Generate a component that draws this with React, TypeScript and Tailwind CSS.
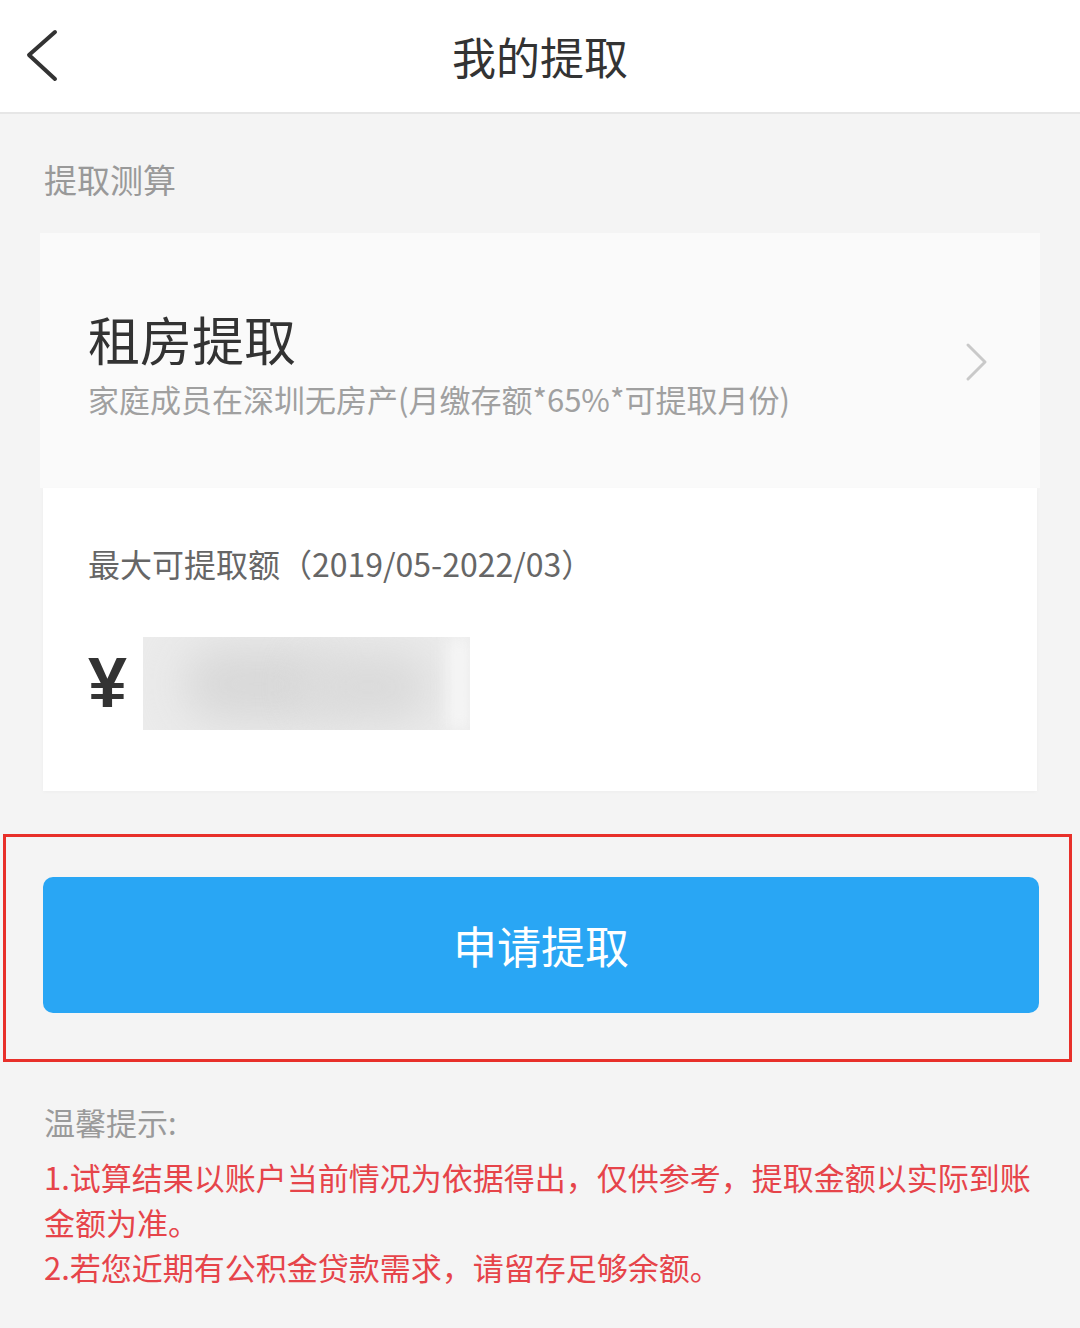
import React from "react";

const font = { fontFamily: '"Noto Sans CJK SC", "Noto Sans", sans-serif' };

export default function App() {
  return (
    <div className="min-h-[1328px] w-[1080px] bg-[#f4f4f4]" style={font}>
      {/* Header */}
      <div className="grid h-[114px] grid-cols-[1fr_auto_1fr] items-center border-b-2 border-[#e6e6e6] bg-white">
        <div className="pl-[24px]">
          <svg width="36" height="54" viewBox="0 0 36 54" fill="none">
            <polyline
              points="31,3 5,26 31,50"
              stroke="#333"
              strokeWidth="4"
              strokeLinecap="round"
              strokeLinejoin="round"
            />
          </svg>
        </div>
        <div className="text-[44px] leading-none text-[#333]">我的提取</div>
        <div />
      </div>

      {/* Section label */}
      <div className="px-[44px] pt-[46px] text-[33px] leading-[1.2] text-[#999]">提取测算</div>

      {/* Cards */}
      <div className="mx-[40px] mt-[33px]">
        <div className="flex items-center justify-between bg-[#fafafa] pl-[48px] pr-[50px] pt-[75px] pb-[71px]">
          <div>
            <div className="text-[52px] leading-[1.2] text-[#333]">租房提取</div>
            <div className="mt-[10px] text-[31px] leading-[1.2] text-[#a0a0a0]">
              家庭成员在深圳无房产(月缴存额*65%*可提取月份)
            </div>
          </div>
          <svg width="26" height="40" viewBox="0 0 26 40" fill="none">
            <polyline
              points="4,3 21,20 4,37"
              stroke="#c9c9c9"
              strokeWidth="3"
              strokeLinecap="round"
              strokeLinejoin="round"
            />
          </svg>
        </div>
        <div className="mx-[3px] bg-white pl-[45px] pt-[56px] pb-[61px] shadow-[0_1px_4px_rgba(0,0,0,0.03)]">
          <div className="text-[32px] leading-[1.2] text-[#666]">最大可提取额（2019/05-2022/03）</div>
          <div className="mt-[54px] flex items-center gap-[16px]">
            <span
              className="text-[70px] font-bold leading-none text-[#333]"
              style={{ fontFamily: '"Liberation Sans", sans-serif' }}
            >
              ¥
            </span>
            <div className="relative h-[93px] w-[327px] overflow-hidden bg-[#ebebeb]">
              <div className="absolute left-[40px] top-[10px] h-[74px] w-[150px] rounded-full bg-[#d8d8d8] blur-[22px]" />
              <div className="absolute left-[160px] top-[14px] h-[72px] w-[130px] rounded-full bg-[#dadada] blur-[22px]" />
              <div className="absolute right-0 top-0 h-full w-[22px] bg-[#f6f6f6] blur-[8px]" />
            </div>
          </div>
        </div>
      </div>

      {/* Highlighted button area */}
      <div className="ml-[3px] mt-[43px] w-[1069px] border-[3px] border-[#e8302a] pl-[37px] pr-[30px] pt-[40px] pb-[46px]">
        <button className="flex h-[136px] w-full items-center justify-center rounded-[10px] bg-[#29a6f4] text-[44px] text-white">
          申请提取
        </button>
      </div>

      {/* Tips */}
      <div className="px-[44px] pt-[41px] pb-[40px]">
        <div className="text-[31px] leading-[1.2] text-[#9a9a9a]">温馨提示:</div>
        <div className="mt-[14px] text-[31px] leading-[45px] text-[#e6444a]">
          <p>1.试算结果以账户当前情况为依据得出，仅供参考，提取金额以实际到账金额为准。</p>
          <p>2.若您近期有公积金贷款需求，请留存足够余额。</p>
        </div>
      </div>
    </div>
  );
}
